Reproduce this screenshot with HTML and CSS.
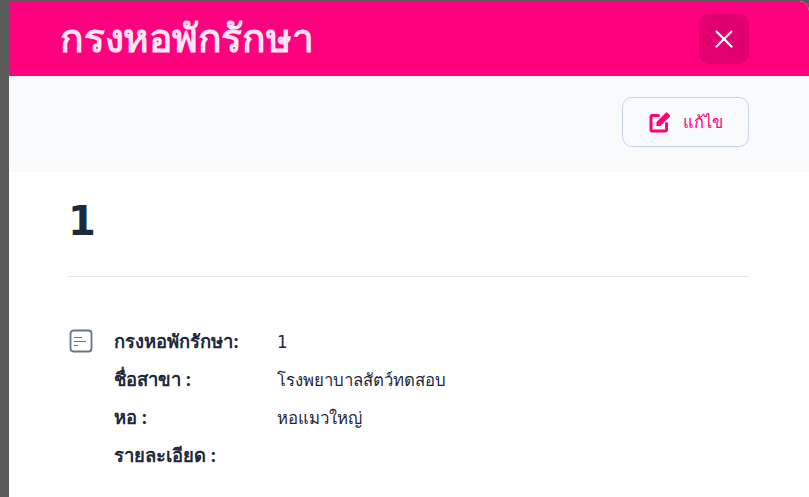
FILE: index.html
```html
<!DOCTYPE html>
<html lang="th">
<head>
<meta charset="utf-8">
<title>กรงหอพักรักษา</title>
<link rel="stylesheet" href="styles.css">
</head>
<body>
<div class="backdrop">
  <main class="modal">
    <header class="head">
      <h1 class="title">กรงหอพักรักษา</h1>
      <button class="close" aria-label="ปิด">
        <svg width="18" height="18" viewBox="0 0 18 18"><path d="M1.5 1.5 16.500 16.500M16.500 1.500 1.500 16.500" stroke="#fff" stroke-width="2.200" stroke-linecap="round" fill="none"/></svg>
      </button>
    </header>
    <div class="toolbar">
      <button class="edit">
        <svg width="22" height="22" viewBox="0 0 22 22"><path d="M9.500 4.500H3.500A1.500 1.500 0 0 0 2 6v12.500A1.500 1.500 0 0 0 3.500 20h12.500a1.500 1.500 0 0 0 1.500-1.500v-6" fill="none" stroke="#ff007f" stroke-width="3" stroke-linecap="round"/><path d="M7.500 15v-4L16.800 1.700a1 1 0 0 1 1.400 0l2.600 2.600a1 1 0 0 1 0 1.400L11.500 15Z" fill="#ff007f"/></svg>
        <span>แก้ไข</span>
      </button>
    </div>
    <section class="content">
      <h2 class="num">1</h2>
      <hr class="rule">
      <div class="details">
        <svg class="doc" width="24" height="24" viewBox="0 0 24 24"><rect x="1.500" y="1.500" width="21" height="21" rx="3" fill="none" stroke="#64748b" stroke-width="1.800"/><path d="M5 8.500h8M5 12.500h12M5 16.500h4" stroke="#64748b" stroke-width="1.200" fill="none"/></svg>
        <dl class="rows">
          <dt>กรงหอพักรักษา:</dt><dd>1</dd>
          <dt>ชื่อสาขา :</dt><dd>โรงพยาบาลสัตว์ทดสอบ</dd>
          <dt>หอ :</dt><dd>หอแมวใหญ่</dd>
          <dt>รายละเอียด :</dt><dd></dd>
        </dl>
      </div>
    </section>
  </main>
</div>
</body>
</html>
```
FILE: styles.css
```css
html, body { margin: 0; height: 100%; overflow: hidden; }
body { font-family: "DejaVu Sans", "Noto Sans", sans-serif; background: #5a5a5a; }
.backdrop { height: 100%; padding: 1px 0 0 9px; box-sizing: border-box; }
.modal { background: #fff; height: 100%; border-radius: 0 10px 0 0; overflow: hidden; }
.head { height: 75px; background: #ff007f; display: flex; align-items: center; justify-content: space-between; padding: 0 60px 0 51px; }
.title { margin: 0; font-size: 39px; letter-spacing: -0.25px; font-weight: 600; line-height: 48px; color: #ffe4f1; }
.close { width: 50px; height: 50px; border: 0; border-radius: 10px; background: #e2006f; display: flex; align-items: center; justify-content: center; padding: 0; }
.toolbar { height: 96px; background: #f9fafc; padding: 21px 60px 0; box-sizing: border-box; display: flex; justify-content: flex-end; align-items: flex-start; }
.edit { width: 127px; height: 50px; box-sizing: border-box; border: 1px solid #c9d5e6; border-radius: 10px; background: #f9fafc; display: flex; align-items: center; justify-content: center; gap: 12px; color: #ff007f; font: 500 16.5px "DejaVu Sans", "Noto Sans", sans-serif; padding: 0; }
.content { padding: 0 60px; }
.num { margin: 0 0 0 -1px; padding-top: 25px; font-size: 40px; line-height: 48px; font-weight: 700; color: #1e293b; }
.rule { margin: 31px 0 0; border: 0; border-top: 1px solid #e2e8f0; }
.details { display: flex; gap: 21px; margin-top: 46px; align-items: flex-start; }
.doc { margin-top: 6px; }
.rows { margin: 4px 0 0; display: grid; grid-template-columns: 163px 1fr; row-gap: 8px; font-size: 16.8px; line-height: 30px; color: #1e293b; }
.rows dt { font-family: Inter, "Noto Sans", sans-serif; font-weight: 700; font-size: 18.4px; line-height: 28px; }
.rows dd { margin: 0; }
```
